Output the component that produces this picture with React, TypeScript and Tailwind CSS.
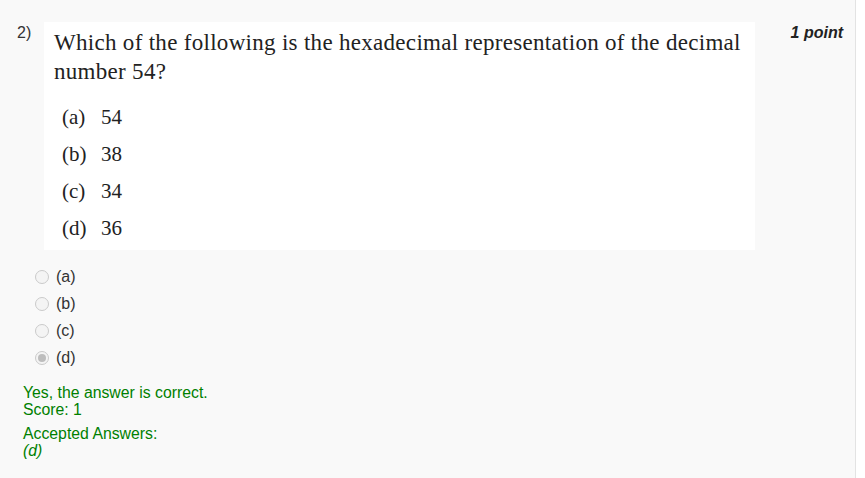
import React from "react";

const options = [
  { key: "a", value: "54" },
  { key: "b", value: "38" },
  { key: "c", value: "34" },
  { key: "d", value: "36" },
];

function Radio({ checked }: { checked: boolean }) {
  return (
    <span className="flex h-[14px] w-[14px] items-center justify-center rounded-full border border-[#cacaca] bg-[#f4f4f4]">
      {checked && <span className="h-[8px] w-[8px] rounded-full bg-[#bdbdbd]" />}
    </span>
  );
}

export default function App() {
  return (
    <div className="h-[478px] w-[865px] bg-white">
      <div
        className="h-full w-[856px] border-r border-[#e3e3e3] bg-[#f9f9f9] text-[16px] text-[#333]"
        style={{ fontFamily: '"Liberation Sans", Arial, sans-serif' }}
      >
        <div className="flex pt-[22px]">
          <div className="w-[44px] pl-[17px] pt-[2px] leading-[18px]">2)</div>
          <div
            className="h-[228px] w-[711px] bg-white pl-[10px] pt-[6px] text-[#222]"
            style={{ fontFamily: '"Liberation Serif", "DejaVu Serif", serif' }}
          >
            <p className="text-[23px] leading-[29px] tracking-[0.3px]">
              Which of the following is the hexadecimal representation of the decimal
              <br />
              number 54?
            </p>
            <div className="mt-[13px] pl-[8px] text-[21px]">
              {options.map((o) => (
                <div key={o.key} className="flex h-[37px] items-center">
                  <span className="w-[39px]">({o.key})</span>
                  <span>{o.value}</span>
                </div>
              ))}
            </div>
          </div>
          <div className="flex-1 pr-[12px] pt-[2px] text-right font-bold italic leading-[18px] text-[#222]">
            1 point
          </div>
        </div>

        <div className="mt-[13px] pl-[35px]">
          {options.map((o) => (
            <div key={o.key} className="flex h-[27px] items-center gap-[7px]">
              <Radio checked={o.key === "d"} />
              <span className="leading-[18px]">({o.key})</span>
            </div>
          ))}
        </div>

        <div className="mt-[13px] pl-[23px] text-[15.8px] leading-[17px] text-[#008000]">
          <div>Yes, the answer is correct.</div>
          <div>Score: 1</div>
          <div className="mt-[7px]">Accepted Answers:</div>
          <div className="italic">(d)</div>
        </div>
      </div>
    </div>
  );
}
